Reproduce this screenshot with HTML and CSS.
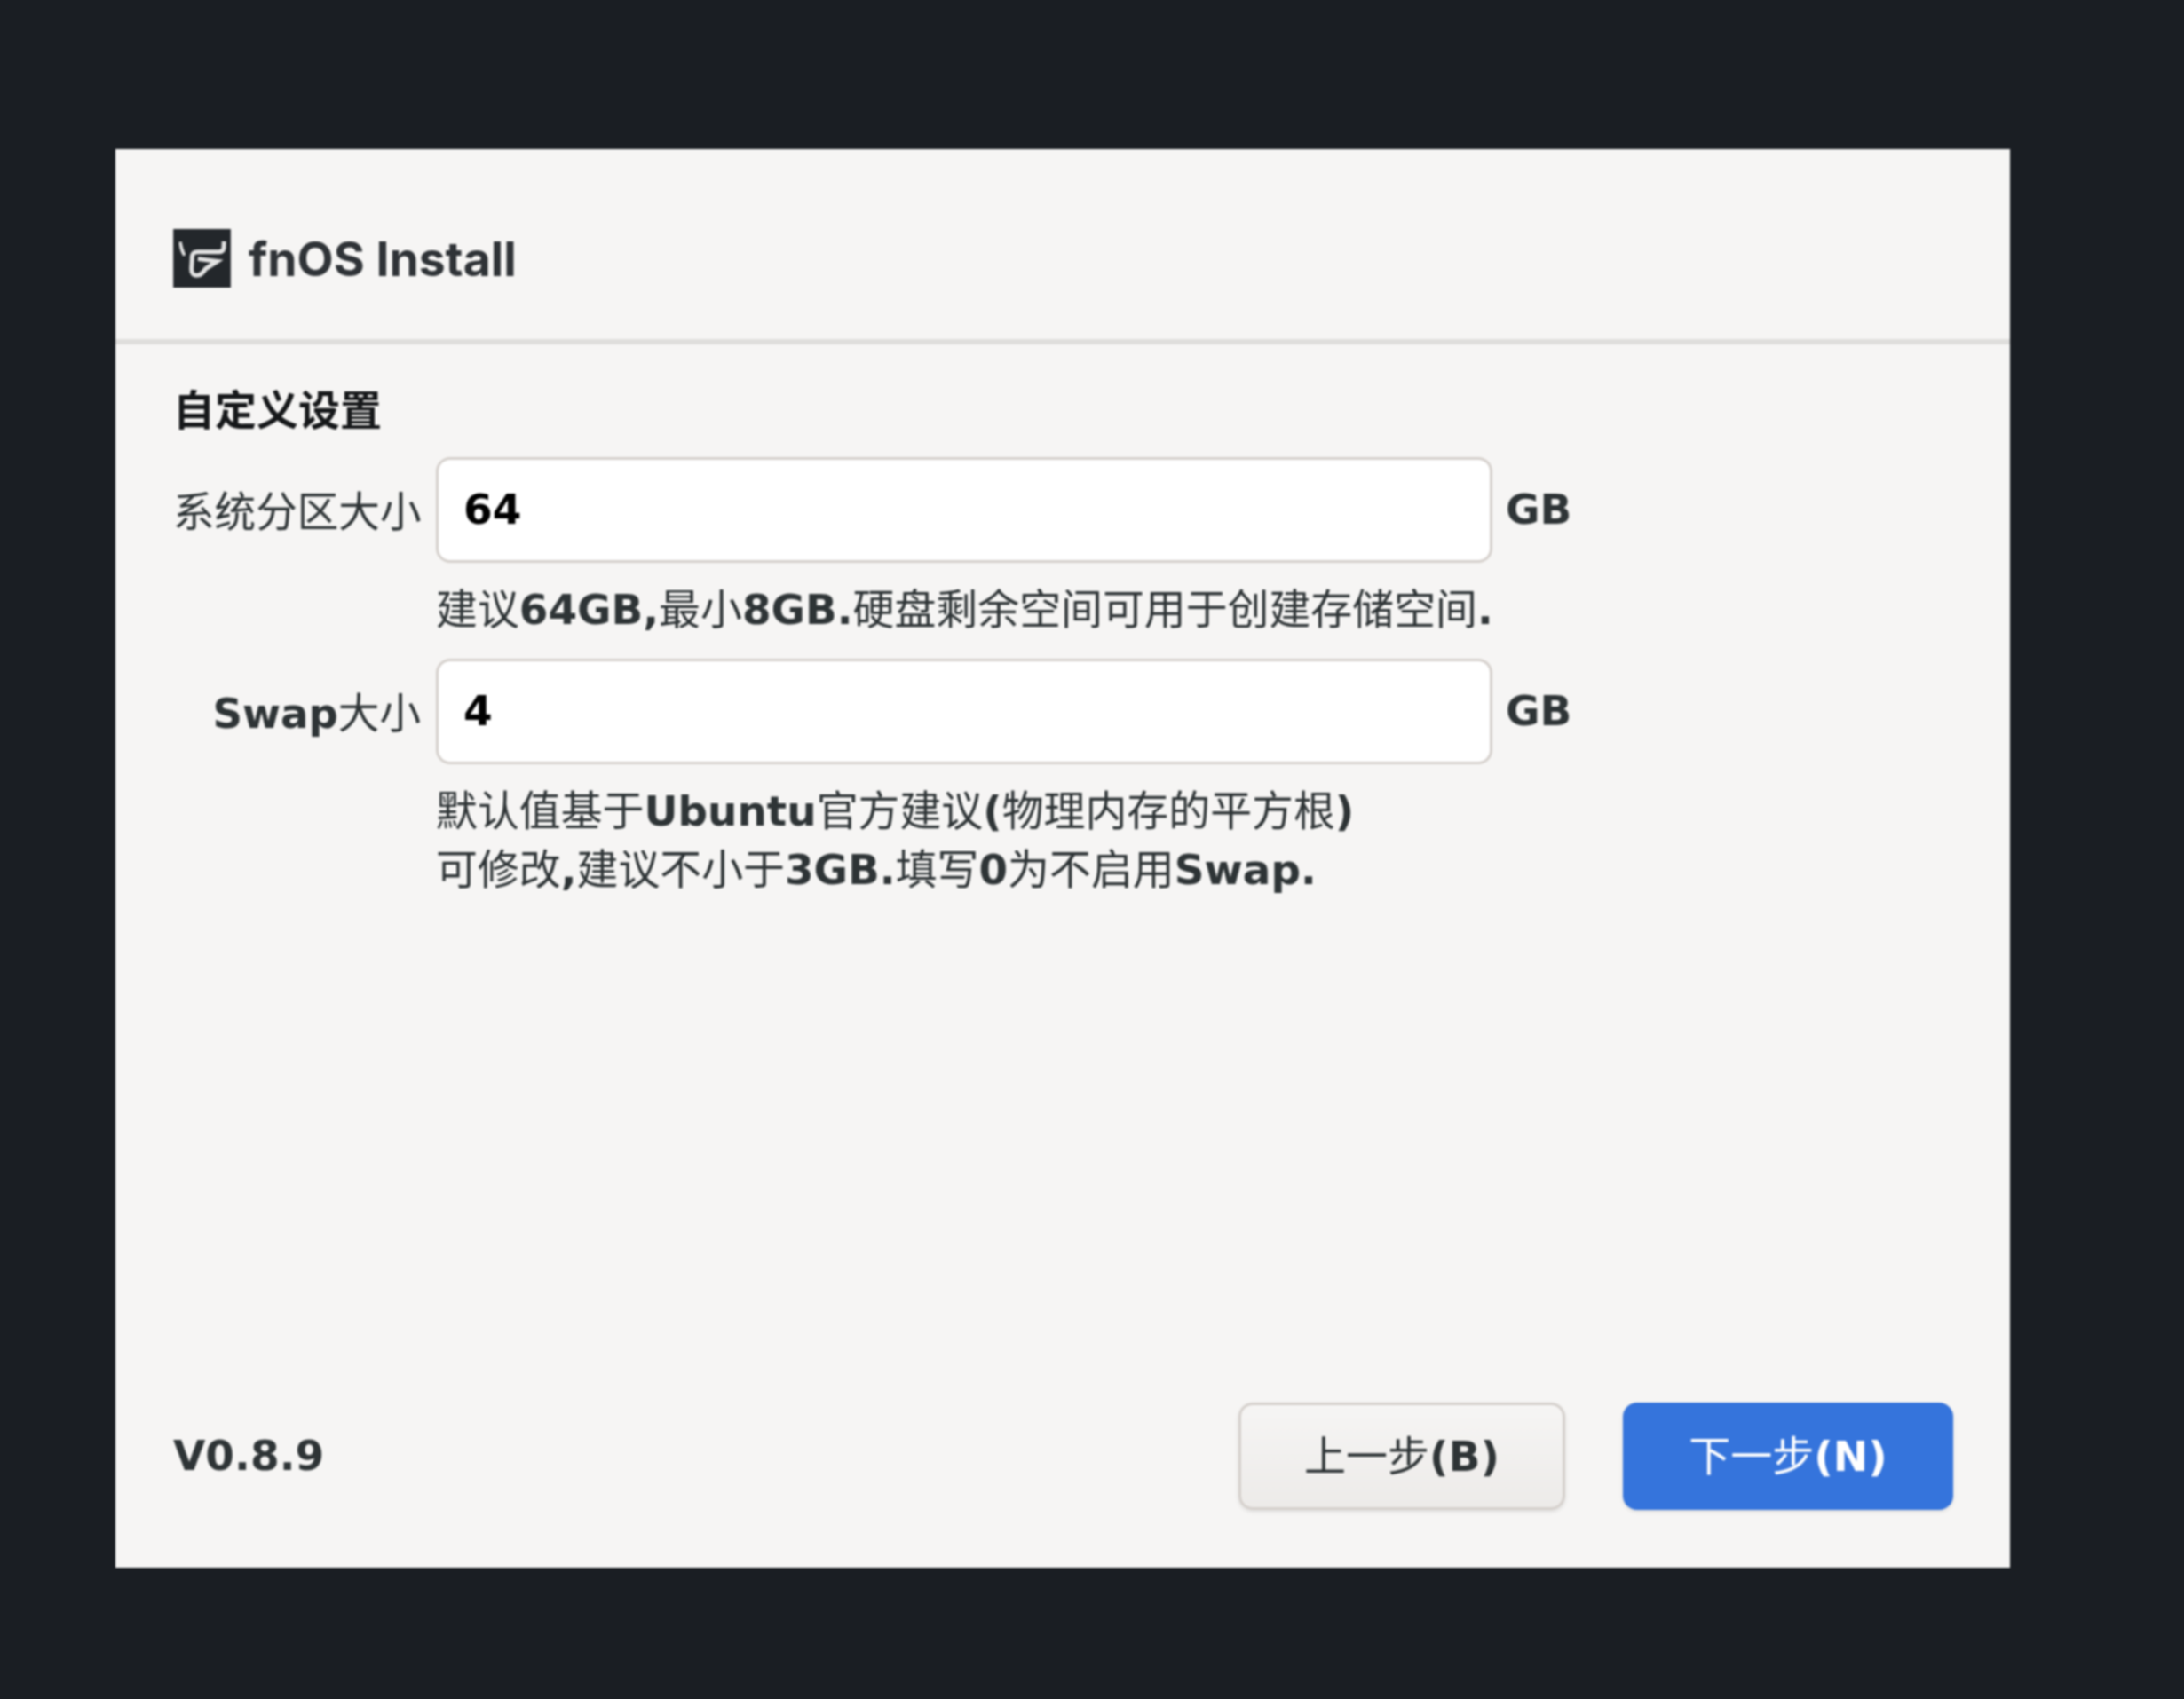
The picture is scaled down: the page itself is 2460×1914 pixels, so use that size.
FILE: index.html
```html
<!doctype html>
<html lang="zh-CN">

<head>
  <title>fnOS Install</title>
  <meta charset="utf-8">
  <link rel="stylesheet" href="styles.css">
</head>

<body>
  <div class="dialog">
    <div class="header">
      <svg class="logo" viewBox="0 0 196 200">
        <rect width="196" height="200" fill="#23272b" />
        <path d="M24 44 Q26 62 38 90 Q26 72 24 44 Z" fill="#e2e2e2" stroke="#e2e2e2" stroke-width="10" />
        <path d="M173 42 L172 66 Q170 78 155 78 L84 78 Q62 78 64 100 L62 136 Q62 160 82 158 Q96 158 110 136 L150 110 L84 102"
          fill="none" stroke="#e2e2e2" stroke-width="15" />
      </svg>
      <div class="app-name">fnOS Install</div>
    </div>

    <div class="content">
      <div class="section-title">自定义设置</div>
      <div class="form">
        <label class="field-label">系统分区大小</label>
        <input class="field-input" type="text" value="64">
        <span class="field-unit">GB</span>
        <div class="field-hint">建议<b>64GB,</b>最小<b>8GB.</b>硬盘剩余空间可用于创建存储空间<b>.</b></div>

        <label class="field-label"><b>Swap</b>大小</label>
        <input class="field-input" type="text" value="4">
        <span class="field-unit">GB</span>
        <div class="field-hint">默认值基于<b>Ubuntu</b>官方建议<b>(</b>物理内存的平方根<b>)</b><br>可修改<b>,</b>建议不小于<b>3GB.</b>填写<b>0</b>为不启用<b>Swap.</b></div>
      </div>
    </div>

    <div class="footer">
      <div class="version">V0.8.9</div>
      <div class="actions">
        <button class="btn">上一步<b>(B)</b></button>
        <button class="btn btn-primary">下一步<b>(N)</b></button>
      </div>
    </div>
  </div>
</body>

</html>
```

FILE: styles.css
```css
html {
  height: 100%;
}

body {
  margin: 0;
  padding: 168px 0 0 130px;
  min-height: 100%;
  box-sizing: border-box;
  background-color: #1a1e23;
  font-family: "DejaVu Sans", "Noto Sans CJK SC", sans-serif;
  font-size: 47px;
  color: #2e3436;
}

.dialog {
  width: 2134px;
  height: 1598px;
  background-color: #f6f5f4;
  display: flex;
  flex-direction: column;
  box-sizing: border-box;
  filter: blur(1px);
}

.header {
  height: 220px;
  box-sizing: border-box;
  padding: 32px 65px 0;
  border-bottom: 6px solid #dfdedc;
  display: flex;
  align-items: center;
  gap: 20px;
}

.logo {
  width: 65px;
  height: 66px;
  flex-shrink: 0;
}

.app-name {
  font-family: Inter, "Liberation Sans", sans-serif;
  font-size: 53.5px;
  font-weight: 700;
  color: #2f3337;
}

.content {
  flex: 1;
  padding: 42px 65px 0;
}

.section-title {
  font-weight: bold;
  line-height: 66px;
  color: #16181a;
  margin-bottom: 19px;
}

.form {
  display: grid;
  grid-template-columns: 279px 1190px auto;
  column-gap: 17px;
  row-gap: 20px;
  align-items: center;
}

.field-label {
  font-size: 46.6px;
  text-align: right;
  white-space: nowrap;
  padding-bottom: 5px;
}

.field-input {
  height: 119px;
  box-sizing: border-box;
  width: 100%;
  padding: 0 28px 3px;
  border: 3px solid #d5d0cc;
  border-radius: 16px;
  background-color: #ffffff;
  font-family: inherit;
  font-size: 47px;
  font-weight: bold;
  color: #000000;
  outline: none;
}

.field-unit {
  font-weight: bold;
  margin-left: -2px;
  padding-bottom: 3px;
}

.field-hint {
  grid-column: 2 / 4;
  font-size: 46.9px;
  line-height: 66px;
  white-space: nowrap;
  margin-bottom: 2px;
}

.footer {
  display: flex;
  align-items: center;
  justify-content: space-between;
  padding: 0 64px 65px 65px;
}

.version {
  font-weight: bold;
  padding-bottom: 3px;
}

.actions {
  display: flex;
  gap: 65px;
}

.btn {
  width: 368px;
  height: 121px;
  box-sizing: border-box;
  border: 3px solid #d5d0cc;
  border-radius: 16px;
  background: linear-gradient(#f6f5f4, #edebe9);
  box-shadow: 0 2px 4px rgba(0, 0, 0, 0.1);
  font-family: inherit;
  font-size: 47px;
  color: #2e3436;
  padding: 0 0 8px;
}

.btn-primary {
  width: 372px;
  border: none;
  background: #3574dc;
  color: #ffffff;
}
```
